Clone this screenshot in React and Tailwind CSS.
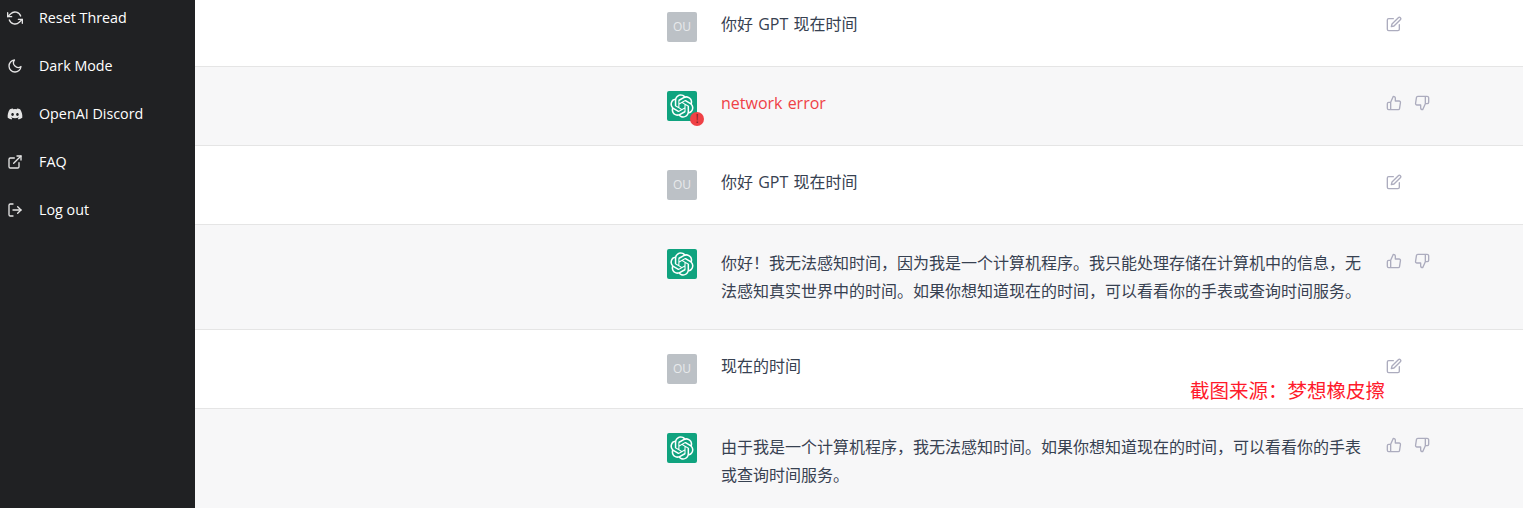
import { FaDiscord } from 'react-icons/fa';

const FONT = "font-['Open_Sans','Noto_Sans_CJK_SC',sans-serif]";

// full-width punctuation
const COMMA = '\uFF0C';
const BANG = '\uFF01';
const COLON = '\uFF1A';

const Stroke = ({ children }) => (
  <svg viewBox="0 0 24 24" className="w-4 h-4" fill="none" stroke="currentColor" strokeWidth="2" strokeLinecap="round" strokeLinejoin="round">
    {children}
  </svg>
);

const menuItems = [
  {
    label: 'Reset Thread',
    icon: (
      <Stroke>
        <polyline points="1 4 1 10 7 10" />
        <polyline points="23 20 23 14 17 14" />
        <path d="M20.49 9A9 9 0 0 0 5.64 5.64L1 10m22 4l-4.64 4.36A9 9 0 0 1 3.51 15" />
      </Stroke>
    ),
  },
  {
    label: 'Dark Mode',
    icon: (
      <Stroke>
        <path d="M21 12.79A9 9 0 1 1 11.21 3 7 7 0 0 0 21 12.79z" />
      </Stroke>
    ),
  },
  { label: 'OpenAI Discord', icon: <FaDiscord className="w-4 h-4" /> },
  {
    label: 'FAQ',
    icon: (
      <Stroke>
        <path d="M18 13v6a2 2 0 0 1-2 2H5a2 2 0 0 1-2-2V8a2 2 0 0 1 2-2h6" />
        <polyline points="15 3 21 3 21 9" />
        <line x1="10" y1="14" x2="21" y2="3" />
      </Stroke>
    ),
  },
  {
    label: 'Log out',
    icon: (
      <Stroke>
        <path d="M9 21H5a2 2 0 0 1-2-2V5a2 2 0 0 1 2-2h4" />
        <polyline points="16 17 21 12 16 7" />
        <line x1="21" y1="12" x2="9" y2="12" />
      </Stroke>
    ),
  },
];

const messages = [
  { from: 'user', text: '你好 GPT 现在时间' },
  { from: 'bot', text: 'network error', error: true },
  { from: 'user', text: '你好 GPT 现在时间' },
  {
    from: 'bot',
    text: `你好${BANG}我无法感知时间${COMMA}因为我是一个计算机程序。我只能处理存储在计算机中的信息${COMMA}无法感知真实世界中的时间。如果你想知道现在的时间${COMMA}可以看看你的手表或查询时间服务。`,
  },
  { from: 'user', text: '现在的时间' },
  {
    from: 'bot',
    text: `由于我是一个计算机程序${COMMA}我无法感知时间。如果你想知道现在的时间${COMMA}可以看看你的手表或查询时间服务。`,
  },
];

const OpenAILogo = () => (
  <svg viewBox="0 0 41 41" className="w-6 h-6" fill="white">
    <path d="M37.5324 16.8707C37.9808 15.5241 38.1363 14.0974 37.9886 12.6859C37.8409 11.2744 37.3934 9.91076 36.676 8.68622C35.6126 6.83404 33.9882 5.3676 32.0373 4.4985C30.0864 3.62941 27.9098 3.40259 25.8215 3.85078C24.8796 2.7893 23.7219 1.94125 22.4257 1.36341C21.1295 0.785575 19.7249 0.491269 18.3058 0.500197C16.1708 0.495044 14.0893 1.16803 12.3614 2.42214C10.6335 3.67624 9.34853 5.44666 8.6917 7.47815C7.30085 7.76286 5.98686 8.3414 4.8377 9.17505C3.68854 10.0087 2.73073 11.0782 2.02839 12.312C0.956464 14.1591 0.498905 16.2988 0.721698 18.4228C0.944492 20.5467 1.83612 22.5449 3.268 24.1293C2.81966 25.4759 2.66413 26.9026 2.81182 28.3141C2.95951 29.7256 3.40701 31.0892 4.12437 32.3138C5.18791 34.1659 6.8123 35.6322 8.76321 36.5013C10.7141 37.3704 12.8907 37.5973 14.9789 37.1492C15.9208 38.2107 17.0786 39.0587 18.3747 39.6366C19.6709 40.2144 21.0755 40.5087 22.4946 40.4998C24.6307 40.5054 26.7133 39.8321 28.4418 38.5772C30.1704 37.3223 31.4556 35.5506 32.1119 33.5179C33.5027 33.2332 34.8167 32.6547 35.9659 31.821C37.115 30.9874 38.0728 29.9178 38.7752 28.684C39.8458 26.8371 40.3023 24.6979 40.0789 22.5748C39.8556 20.4517 38.9639 18.4544 37.5324 16.8707ZM22.4978 37.8849C20.7443 37.8874 19.0459 37.2733 17.6994 36.1501C17.7601 36.117 17.8666 36.0586 17.936 36.0161L25.9004 31.4156C26.1003 31.3019 26.2663 31.137 26.3813 30.9378C26.4964 30.7386 26.5563 30.5124 26.5549 30.2825V19.0542L29.9213 20.998C29.9389 21.0068 29.9541 21.0198 29.9656 21.0359C29.977 21.052 29.9842 21.0707 29.9867 21.0902V30.3889C29.9842 32.375 29.1946 34.2791 27.7909 35.6841C26.3872 37.0892 24.4838 37.8806 22.4978 37.8849ZM6.39227 31.0064C5.51397 29.4888 5.19742 27.7107 5.49804 25.9832C5.55718 26.0187 5.66048 26.0818 5.73461 26.1244L13.699 30.7248C13.8975 30.8408 14.1233 30.902 14.3532 30.902C14.583 30.902 14.8088 30.8408 15.0073 30.7248L24.731 25.1103V28.9979C24.7321 29.0177 24.7283 29.0376 24.7199 29.0556C24.7115 29.0736 24.6988 29.0893 24.6829 29.1012L16.6317 33.7497C14.9096 34.7416 12.8643 35.0097 10.9447 34.4954C9.02506 33.9811 7.38785 32.7263 6.39227 31.0064ZM4.29707 13.6194C5.17156 12.0998 6.55279 10.9364 8.19885 10.3327C8.19885 10.4013 8.19491 10.5228 8.19491 10.6071V19.808C8.19351 20.0378 8.25334 20.2638 8.36823 20.4629C8.48312 20.6619 8.64893 20.8267 8.84863 20.9404L18.5723 26.5542L15.206 28.4979C15.1894 28.5089 15.1703 28.5155 15.1505 28.5173C15.1307 28.5191 15.1107 28.516 15.0924 28.5082L7.04046 23.8557C5.32135 22.8601 4.06716 21.2235 3.55289 19.3046C3.03862 17.3858 3.30624 15.3413 4.29707 13.6194ZM31.955 20.0556L22.2312 14.4411L25.5976 12.4981C25.6142 12.4872 25.6333 12.4805 25.6531 12.4787C25.6729 12.4769 25.6928 12.4801 25.7111 12.4879L33.7631 17.1364C34.9967 17.849 36.0017 18.8982 36.6606 20.1613C37.3194 21.4244 37.6047 22.849 37.4832 24.2684C37.3617 25.6878 36.8382 27.0432 35.9743 28.1759C35.1103 29.3086 33.9415 30.1717 32.6047 30.6641C32.6047 30.5947 32.6047 30.4733 32.6047 30.3889V21.188C32.6066 20.9586 32.5474 20.7328 32.4332 20.5338C32.319 20.3348 32.154 20.1698 31.955 20.0556ZM35.3055 15.0128C35.2464 14.9765 35.1431 14.9142 35.069 14.8717L27.1045 10.2712C26.906 10.1554 26.6803 10.0943 26.4504 10.0943C26.2206 10.0943 25.9948 10.1554 25.7963 10.2712L16.0726 15.8858V11.9982C16.0715 11.9783 16.0753 11.9585 16.0837 11.9405C16.0921 11.9225 16.1048 11.9068 16.1207 11.8949L24.1719 7.25025C25.4053 6.53903 26.8158 6.19376 28.2383 6.25482C29.6608 6.31589 31.0364 6.78077 32.2044 7.59508C33.3723 8.40939 34.2842 9.53945 34.8334 10.8531C35.3826 12.1667 35.5464 13.6095 35.3055 15.0128ZM14.2424 21.9419L10.8752 19.9981C10.8576 19.9893 10.8423 19.9763 10.8309 19.9602C10.8195 19.9441 10.8122 19.9254 10.8098 19.9058V10.6071C10.8107 9.18295 11.2173 7.78848 11.9819 6.58696C12.7466 5.38544 13.8377 4.42659 15.1275 3.82264C16.4173 3.21869 17.8524 2.99464 19.2649 3.1767C20.6775 3.35876 22.0089 3.93941 23.1034 4.85067C23.0427 4.88379 22.937 4.94215 22.8668 4.98473L14.9024 9.58517C14.7025 9.69878 14.5366 9.86356 14.4215 10.0626C14.3065 10.2616 14.2466 10.4877 14.2479 10.7175L14.2424 21.9419ZM16.071 17.9991L20.4018 15.4978L24.7325 17.9975V22.9985L20.4018 25.4983L16.071 22.9985V17.9991Z" />
  </svg>
);

const EditIcon = () => (
  <Stroke>
    <path d="M11 4H4a2 2 0 0 0-2 2v14a2 2 0 0 0 2 2h14a2 2 0 0 0 2-2v-7" />
    <path d="M18.5 2.5a2.121 2.121 0 0 1 3 3L12 15l-4 1 1-4 9.5-9.5z" />
  </Stroke>
);

const ThumbUp = () => (
  <Stroke>
    <path d="M14 9V5a3 3 0 0 0-3-3l-4 9v11h11.28a2 2 0 0 0 2-1.7l1.38-9a2 2 0 0 0-2-2.3zM7 22H4a2 2 0 0 1-2-2v-7a2 2 0 0 1 2-2h3" />
  </Stroke>
);

const ThumbDown = () => (
  <Stroke>
    <path d="M10 15v4a3 3 0 0 0 3 3l4-9V2H5.72a2 2 0 0 0-2 1.7l-1.38 9a2 2 0 0 0 2 2.3zm7-13h2.67A2.31 2.31 0 0 1 22 4v7a2.31 2.31 0 0 1-2.33 2H17" />
  </Stroke>
);

const Message = ({ message }) => {
  const isUser = message.from === 'user';
  return (
    <div className={`flex pl-[472px] pt-6 pb-6 border-b border-[#e5e5e5] ${isUser ? 'bg-white' : 'bg-[#f7f7f8]'}`}>
      {isUser ? (
        <div className="w-[30px] h-[30px] shrink-0 rounded-[2px] bg-[#bcc1c6] flex items-center justify-center text-[12px] font-medium text-[#e8eaec]">
          OU
        </div>
      ) : (
        <div className="relative w-[30px] h-[30px] shrink-0 rounded-[2px] bg-[#10a37f] flex items-center justify-center">
          <OpenAILogo />
          {message.error && (
            <div className="absolute -right-[7px] -bottom-[5px] w-[14px] h-[14px] rounded-full bg-[#ef4146] flex items-center justify-center text-[12px] leading-none text-[#7f1d1d]">
              !
            </div>
          )}
        </div>
      )}
      <div
        className={`ml-6 w-[644px] text-[16px] ${message.text.length > 40 ? 'leading-7' : 'leading-6 [word-spacing:1px]'} ${
          message.error ? 'text-[#ef4146]' : 'text-[#374151]'
        }`}
      >
        {message.text}
      </div>
      <div className="ml-[21px] pt-[4px] flex gap-3 h-fit text-[#acacbe]">
        {isUser ? (
          <EditIcon />
        ) : (
          <>
            <ThumbUp />
            <ThumbDown />
          </>
        )}
      </div>
    </div>
  );
};

export default function App() {
  return (
    <div className={`flex h-[508px] overflow-hidden bg-white ${FONT}`}>
      <aside className="w-[195px] shrink-0 bg-[#202123] -mt-[6px]">
        {menuItems.map((item) => (
          <div key={item.label} className="h-12 pl-[7px] flex items-center gap-4 text-[14.3px] text-white">
            <span className="w-4 h-4 shrink-0 text-[#e5e5e5]">{item.icon}</span>
            <span>{item.label}</span>
          </div>
        ))}
      </aside>
      <main className="relative flex-1 overflow-hidden">
        <div className="-mt-3">
          {messages.map((message, i) => (
            <Message key={i} message={message} />
          ))}
        </div>
        <div className="absolute left-[995px] top-[377px] text-[19.5px] leading-7 text-[#ff1a2b] whitespace-nowrap [text-shadow:0_0_3px_white]">
          {`截图来源${COLON}梦想橡皮擦`}
        </div>
      </main>
    </div>
  );
}
